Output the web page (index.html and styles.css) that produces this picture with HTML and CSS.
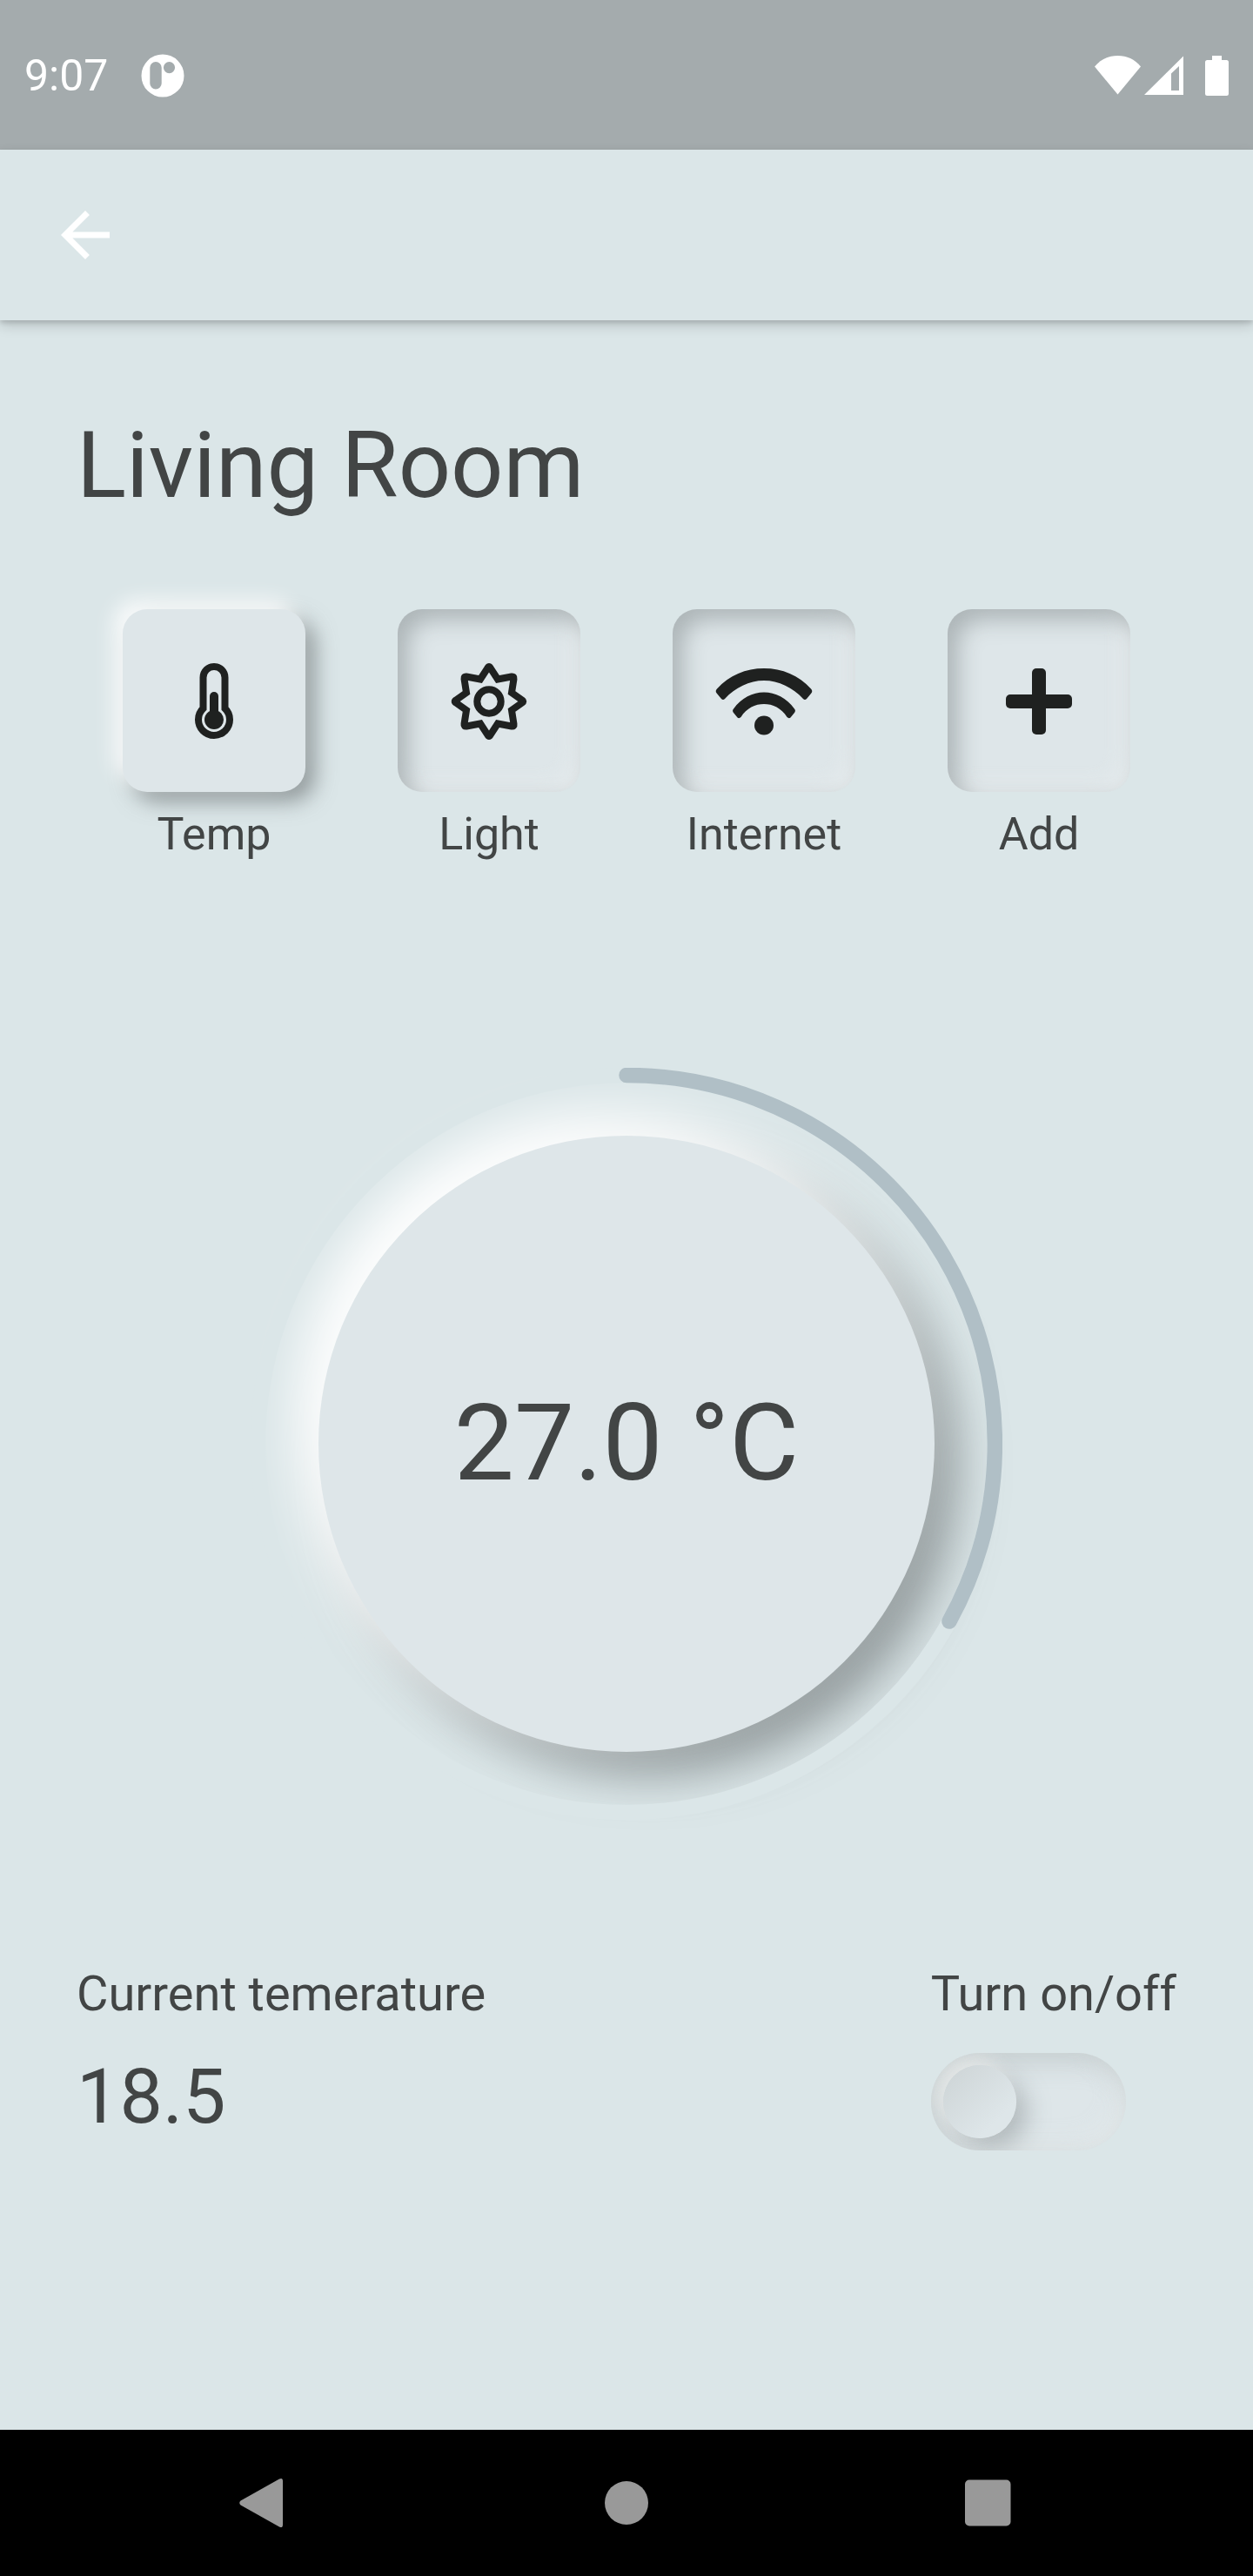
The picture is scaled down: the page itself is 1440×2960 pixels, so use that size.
FILE: index.html
```
<!DOCTYPE html>
<html lang="en">
<head>
<meta charset="utf-8">
<meta name="viewport" content="width=device-width, initial-scale=1">
<title>Living Room</title>
<link rel="stylesheet" href="styles.css">
</head>
<body>
<div class="screen">
  <div class="status-bar">
    <span class="clock">9:07</span>
    <svg class="status-app" viewBox="0 0 50 50" aria-hidden="true"><path fill="#fff" fill-rule="evenodd" d="M25 .5a24.500 24.500 0 1 1 0 49a24.500 24.500 0 1 1 0-49zM17 9a6.700 6.700 0 0 0-6.700 6.700v18a6.700 6.700 0 0 0 13.400 0v-18A6.700 6.700 0 0 0 17 9zM32.500 9a6.600 6.600 0 1 0 0 13.200a6.600 6.600 0 0 0 0-13.200z"/></svg>
    <svg class="status-icons" viewBox="0 0 156 48" aria-hidden="true">
      <path fill="#fff" d="M27.500 45.500L1 13.500C8 5 17 1 27.500 1S47 5 54 13.500z"/>
      <path fill="#fff" fill-rule="evenodd" d="M58 46L103 1.500V46zM89 21.500V41h9V13z"/>
      <path fill="#fff" d="M136 1h11v5h5.500q2.500 0 2.500 2.500v36q0 2.500-2.500 2.500h-22q-2.500 0-2.500-2.500v-36q0-2.500 2.500-2.500h5.500z"/>
    </svg>
  </div>
  <header class="app-bar">
    <button class="back" type="button" aria-label="Back"><svg viewBox="0 0 24 24"><path fill="#fff" d="M20 11H7.830l5.590-5.590L12 4l-8 8 8 8 1.410-1.410L7.830 13H20v-2z"/></svg></button>
  </header>
  <main class="content">
    <h1 class="title">Living Room</h1>
    <div class="tabs">
      <div class="tab">
        <button class="tile tile-active" type="button" aria-labelledby="t1"><svg viewBox="0 0 88 88"><path fill="none" stroke="#1f2120" stroke-width="8" d="M31.500 52V16.500a12.500 12.500 0 0 1 25 0V52A18 18 0 1 1 31.500 52z"/><path stroke="#1f2120" stroke-width="10" stroke-linecap="round" d="M44 38v26"/><circle cx="44" cy="65" r="11" fill="#1f2120"/></svg></button>
        <span class="tab-label" id="t1">Temp</span>
      </div>
      <div class="tab">
        <button class="tile" type="button" aria-labelledby="t2"><svg viewBox="0 0 88 88"><path fill="none" stroke="#1f2120" stroke-width="8" d="M42.500 5.500Q44 2.500 45.500 5.500L54 18.500 70 15.500Q73 15 72.500 18L70 34 82 42.500Q84.500 44 82 45.500L70 54 72.500 70Q73 73 70 72.500L54 69.500 45.500 82.500Q44 85.500 42.500 82.500L34 69.500 18 72.500Q15 73 15.500 70L18 54 6 45.500Q3.500 44 6 42.500L18 34 15.500 18Q15 15 18 15.500L34 18.500z"/><circle cx="44" cy="44" r="13.700" fill="none" stroke="#1f2120" stroke-width="8"/></svg></button>
        <span class="tab-label" id="t2">Light</span>
      </div>
      <div class="tab">
        <button class="tile" type="button" aria-labelledby="t3"><svg class="wide" viewBox="0 0 112 88"><path fill="#1f2120" d="M2 35C0 33 .500 31 2 29.500C16 14 35 6 56 6S96 14 110 29.500C111.500 31 112 33 110 35L105 41Q103 43 101 41C89 28 73 20 56 20S23 28 11 41Q9 43 7 41z M21 57C20 55.500 19.500 54 21 52.500C30 40 43 33.500 56 33.500S82 40 91 52.500C92.500 54 92 55.500 91 57L86.500 62.500Q84.500 64 82.500 62C76 51.500 66 47 56 47S36 51.500 29.500 62Q27.500 64 25.500 62.500z"/><circle cx="56" cy="71.500" r="11" fill="#1f2120"/></svg></button>
        <span class="tab-label" id="t3">Internet</span>
      </div>
      <div class="tab">
        <button class="tile" type="button" aria-labelledby="t4"><svg viewBox="0 0 88 88"><rect x="36" y="6" width="16" height="76" rx="5" fill="#1f2120"/><rect x="6" y="36" width="76" height="16" rx="5" fill="#1f2120"/></svg></button>
        <span class="tab-label" id="t4">Add</span>
      </div>
    </div>
    <div class="dial">
      <svg class="dial-ring" viewBox="0 0 864 864" aria-hidden="true">
        <circle cx="432" cy="432" r="423.500" fill="none" stroke="#dbe6e8" stroke-width="17.500"/>
        <path d="M432 8.500A423.500 423.500 0 0 1 803 636" fill="none" stroke="#b0bfc6" stroke-width="17.500" stroke-linecap="round"/>
      </svg>
      <span class="dial-value">27.0 °C</span>
    </div>
    <div class="footer">
      <div class="reading">
        <span class="caption">Current temerature</span>
        <span class="current">18.5</span>
      </div>
      <div class="power">
        <label class="caption" for="power">Turn on/off</label>
        <input class="switch" id="power" type="checkbox" role="switch">
      </div>
    </div>
  </main>
  <nav class="nav-bar">
    <button type="button" aria-label="Back"><svg viewBox="0 0 60 60"><path fill="#999" d="M3.500 27.500L48 2.500Q52 .500 52 5V55Q52 59.500 48 57.500L3.500 32.500Q1 30 3.500 27.500z"/></svg></button>
    <button type="button" aria-label="Home"><svg viewBox="0 0 60 60"><circle cx="30" cy="30" r="25" fill="#999"/></svg></button>
    <button type="button" aria-label="Overview"><svg viewBox="0 0 60 60"><rect x="2" y="3.500" width="52.500" height="53" rx="5" fill="#999"/></svg></button>
  </nav>
</div>
</body>
</html>
```
FILE: styles.css
```
* { box-sizing: border-box; }
body {
  margin: 0;
  background: #dbe6e8;
  color: #424545;
  font-family: Roboto, "Liberation Sans", sans-serif;
}
button {
  margin: 0;
  padding: 0;
  border: 0;
  background: none;
  cursor: pointer;
}
svg { display: block; }
.screen {
  display: flex;
  flex-direction: column;
  min-height: 100vh;
}
.status-bar {
  display: flex;
  align-items: center;
  height: 172px;
  padding: 2px 27px 0 28px;
  background: #a4abad;
  color: #fff;
}
.clock { font-size: 50px; line-height: 60px; }
.status-app { width: 50px; height: 50px; margin-left: 38px; }
.status-icons { width: 156px; height: 48px; margin-left: auto; }
.app-bar {
  display: flex;
  align-items: center;
  height: 196px;
  padding: 0 56px;
  box-shadow: 0 6px 14px rgba(0, 0, 0, .16), 0 3px 5px rgba(0, 0, 0, .12);
}
.back svg { width: 84px; height: 84px; }
.content {
  flex: 1;
  padding: 105px 88px 0;
}
.title {
  margin: 0;
  font-size: 106px;
  line-height: 124px;
  font-weight: 400;
}
.tabs {
  display: grid;
  grid-template-columns: repeat(4, 1fr);
  margin-top: 103px;
}
.tab {
  display: flex;
  flex-direction: column;
  align-items: center;
}
.tile {
  display: grid;
  place-items: center;
  width: 210px;
  height: 210px;
  padding-top: 2px;
  border-radius: 28px;
  background: #dee6e9;
  box-shadow: inset 12px 12px 26px rgba(120, 128, 130, .48), inset -10px -10px 24px rgba(240, 242, 243, .4);
}
.tile-active {
  box-shadow: -11px -11px 22px rgba(255, 255, 255, .8), 11px 11px 24px rgba(95, 102, 103, .6);
}
.tile svg { width: 88px; height: 88px; }
.tile .wide { width: 112px; }
.tab-label {
  margin-top: 18px;
  font-size: 52px;
  line-height: 62px;
}
.dial {
  position: relative;
  display: grid;
  place-items: center;
  width: 708px;
  height: 708px;
  margin: 315px auto 0;
  border-radius: 50%;
  background: #dee6e9;
  box-shadow: -26px -26px 54px rgba(255, 255, 255, .95), 26px 26px 54px rgba(96, 104, 105, .6);
}
.dial-ring {
  position: absolute;
  inset: -78px;
}
.dial-value {
  padding-bottom: 3px;
  font-size: 123px;
  line-height: 144px;
}
.footer {
  display: flex;
  justify-content: space-between;
  margin-top: 246px;
}
.reading, .power {
  display: flex;
  flex-direction: column;
  align-items: flex-start;
}
.caption { font-size: 56px; line-height: 64px; }
.current { margin-top: 35px; font-size: 88px; line-height: 102px; }
.switch {
  appearance: none;
  width: 224px;
  height: 112px;
  margin: 36px 0 0;
  padding: 14px;
  overflow: hidden;
  border-radius: 56px;
  background: #dee6e9;
  box-shadow: inset 8px 10px 30px rgba(140, 148, 150, .3), inset -8px -8px 24px rgba(236, 240, 240, .5);
}
.switch::before {
  content: "";
  display: block;
  width: 84px;
  height: 84px;
  border-radius: 50%;
  background: linear-gradient(135deg, #cfd6d8 10%, #dee6e9 75%);
  box-shadow: -10px -10px 20px rgba(240, 240, 238, .6), 12px 12px 28px rgba(110, 118, 120, .4);
}
.switch:checked::before { margin-left: 112px; }
.nav-bar {
  display: grid;
  grid-template-columns: repeat(3, 1fr);
  align-items: center;
  justify-items: center;
  height: 168px;
  padding: 0 95px;
  background: #000;
}
.nav-bar svg { width: 60px; height: 60px; }
```
